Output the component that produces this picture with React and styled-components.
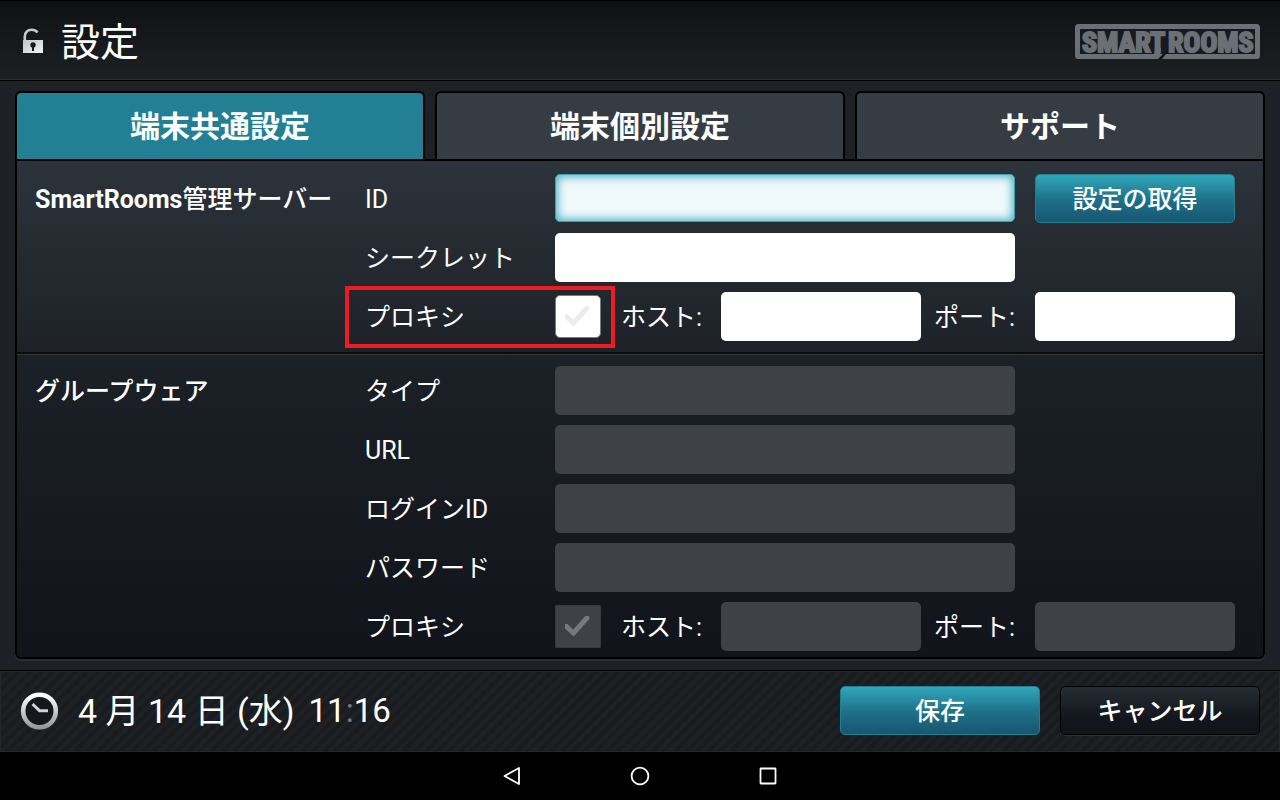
import { useState } from 'react';
import styled, { createGlobalStyle, css } from 'styled-components';

const tabs = ['端末共通設定', '端末個別設定', 'サポート'];

const LockIcon = () => (
  <svg width="24" height="28" viewBox="0 0 24 28" aria-hidden="true">
    <defs>
      <linearGradient id="lockBody" x1="0" y1="0" x2="1" y2="1">
        <stop offset="0" stopColor="#c4c4c4" />
        <stop offset="1" stopColor="#f2f2f2" />
      </linearGradient>
    </defs>
    <path d="M2.800 14V9.500C2.800 5 6 2.800 9.500 2.800C12 2.800 14 3.500 15.500 5.500" fill="none" stroke="#c8c8c8" strokeWidth="2.600" />
    <rect x="1" y="13" width="20" height="13" fill="url(#lockBody)" />
    <circle cx="11" cy="18" r="2.700" fill="#17191c" />
    <rect x="10" y="18" width="2" height="6" fill="#17191c" />
  </svg>
);

const ClockIcon = () => (
  <svg width="38" height="38" viewBox="0 0 38 38" aria-hidden="true">
    <defs>
      <linearGradient id="clockRing" x1="0" y1="0" x2="0" y2="1">
        <stop offset="0" stopColor="#ffffff" />
        <stop offset="1" stopColor="#989898" />
      </linearGradient>
    </defs>
    <circle cx="19.500" cy="19" r="16.300" fill="#15171a" stroke="url(#clockRing)" strokeWidth="4.600" />
    <path d="M12.500 12L19.500 18.700H28" fill="none" stroke="#d2d2d2" strokeWidth="3" />
  </svg>
);

const CheckMark = () => (
  <svg width="26" height="22" viewBox="0 0 26 22" aria-hidden="true">
    <path d="M1.500 10.500L8.500 17L22 2" fill="none" stroke="currentColor" strokeWidth="5" strokeLinecap="round" />
  </svg>
);

const Logo = () => (
  <svg width="186" height="38" viewBox="0 0 186 38" role="img" aria-label="SMART ROOMS">
    <rect x="3.500" y="4.500" width="180" height="30" rx="1" fill="#17191c" stroke="#6b6f76" strokeWidth="5" />
    <path d="M84 37L94 27V32H92L88 37Z" fill="#111316" />
    <path d="M81 26H87C87 32 86 37 77 37V33C80 33 81 31 81 26Z" fill="#6b6f76" />
    <LogoText x="8" y="30">SMART</LogoText>
    <LogoText x="94" y="30">ROOMS</LogoText>
  </svg>
);

const TextRow = ({ label, id, type = 'text', disabled, focused, children }) => (
  <>
    <Label htmlFor={id}>{label}</Label>
    <Field id={id} type={type} disabled={disabled} $focused={focused} />
    <Side>{children}</Side>
  </>
);

const ProxyRow = ({ id, disabled, marked }) => (
  <>
    <ProxyToggle $marked={marked}>
      <Label htmlFor={`${id}-proxy`}>プロキシ</Label>
      <CheckBox $disabled={disabled}>
        <input id={`${id}-proxy`} type="checkbox" disabled={disabled} />
        <CheckMark />
      </CheckBox>
    </ProxyToggle>
    <ProxyHost>
      <Label htmlFor={`${id}-host`}>ホスト:</Label>
      <Field id={`${id}-host`} type="text" disabled={disabled} />
      <Label htmlFor={`${id}-port`}>ポート:</Label>
    </ProxyHost>
    <Side>
      <Field id={`${id}-port`} type="text" disabled={disabled} />
    </Side>
  </>
);

const App = () => {
  const [active, setActive] = useState(0);

  return (
    <Screen>
      <GlobalStyle />
      <Header>
        <LockIcon />
        <h1>設定</h1>
        <Logo />
      </Header>
      <Main>
        <TabBar role="tablist">
          {tabs.map((tab, i) => (
            <Tab key={tab} type="button" role="tab" aria-selected={i === active} $active={i === active} onClick={() => setActive(i)}>
              {tab}
            </Tab>
          ))}
        </TabBar>
        <Panel>
          <Section $raised>
            <h2><b>SmartRooms</b>管理サーバー</h2>
            <Rows>
              <TextRow label="ID" id="server-id" focused>
                <Button type="button" $primary>設定の取得</Button>
              </TextRow>
              <TextRow label="シークレット" id="server-secret" type="password" />
              <ProxyRow id="server" marked />
            </Rows>
          </Section>
          <Section>
            <h2>グループウェア</h2>
            <Rows>
              <TextRow label="タイプ" id="group-type" disabled />
              <TextRow label="URL" id="group-url" disabled />
              <TextRow label="ログインID" id="group-login" disabled />
              <TextRow label="パスワード" id="group-password" type="password" disabled />
              <ProxyRow id="group" disabled />
            </Rows>
          </Section>
        </Panel>
      </Main>
      <Footer>
        <ClockIcon />
        <DateText>4 月 14 日 (水)</DateText>
        <TimeText>11<span>:</span>16</TimeText>
        <Button type="button" $primary>保存</Button>
        <Button type="button">キャンセル</Button>
      </Footer>
      <NavBar>
        <NavButton type="button" aria-label="戻る">
          <svg width="24" height="24" viewBox="0 0 24 24"><path d="M19 4v16L4.500 12Z" /></svg>
        </NavButton>
        <NavButton type="button" aria-label="ホーム">
          <svg width="24" height="24" viewBox="0 0 24 24"><circle cx="12" cy="12" r="8.400" /></svg>
        </NavButton>
        <NavButton type="button" aria-label="アプリ履歴">
          <svg width="24" height="24" viewBox="0 0 24 24"><rect x="4.500" y="4.500" width="15" height="15" rx="0.500" /></svg>
        </NavButton>
      </NavBar>
    </Screen>
  );
};

const GlobalStyle = createGlobalStyle`
  * {
    box-sizing: border-box;
  }

  body {
    margin: 0;
    background: #000;
    color: #fff;
    font: 25px/36px Roboto, 'Noto Sans CJK JP', sans-serif;
  }

  h1, h2 {
    margin: 0;
  }

  button, input {
    font: inherit;
    color: inherit;
  }
`

const Screen = styled.div`
  display: flex;
  flex-direction: column;
  min-height: 100vh;
  background: #1d2024;
`

const Header = styled.header`
  display: flex;
  align-items: center;
  height: 81px;
  padding: 0 20px 0 22px;
  border-top: 1px solid #000;
  border-bottom: 1px solid #000;
  box-shadow: inset 0 -1px #2c2f32;
  background: linear-gradient(#0f1012, #1d2124);

  h1 {
    flex: 1;
    padding: 4px 0 0 15px;
    font-size: 39px;
    font-weight: 400;
    line-height: 56px;
  }
`

const LogoText = styled.text`
  fill: #6b6f76;
  stroke: #6b6f76;
  stroke-width: 2px;
  font: 700 28px 'Liberation Sans Narrow', 'Roboto Condensed', Roboto, sans-serif;
`

const Main = styled.main`
  flex: 1;
  display: flex;
  flex-direction: column;
  padding: 10px 15px 11px;
`

const TabBar = styled.div`
  display: grid;
  grid-template-columns: repeat(3, 1fr);
  gap: 10px;
`

const Tab = styled.button`
  height: 68px;
  padding: 2px 0 0;
  border: 2px solid #000;
  border-bottom: 0;
  border-radius: 6px 6px 0 0;
  background: ${({ $active }) => ($active ? '#237f93' : '#363c44')};
  font-size: 30px;
  font-weight: 700;
`

const Panel = styled.div`
  flex: 1;
  border: 2px solid #000;
  border-radius: 0 0 6px 6px;
  box-shadow: 0 2px #2a2d31;
  background: #12151a;
  overflow: hidden;
`

const Section = styled.section`
  display: grid;
  grid-template-columns: 330px 1fr;
  padding: 12px 28px 6px 18px;
  background: linear-gradient(#1c2027, #11141a);

  ${({ $raised }) => $raised && css`
    position: relative;
    padding: 13px 28px 11px 18px;
    border-bottom: 2px solid #0a0b0d;
    box-shadow: 0 1px #34373b;
    background: linear-gradient(#2c333a, #1e2128);
  `}

  h2 {
    padding-top: 1px;
    font-size: 25px;
    font-weight: 500;
    line-height: 49px;
  }

  b {
    font-weight: 700;
  }
`

const Rows = styled.div`
  display: grid;
  grid-template-columns: 190px 46px 1fr 220px;
  gap: 10px 0;
`

const Label = styled.label`
  height: 49px;
  padding-top: 1px;
  line-height: 49px;
  white-space: nowrap;
`

const Field = styled.input`
  min-width: 0;
  width: 100%;
  height: 49px;
  padding: 0 12px;
  border: 0;
  border-radius: 5px;
  outline: 0;
  background: #fff;
  color: #222;

  ${Label} + & {
    grid-column: 2 / 4;
  }

  &:disabled {
    background: #3e4145;
  }

  ${({ $focused }) => $focused && css`
    height: 48px;
    border: 1px solid #3aa3b3;
    background: #eff8fb;
    box-shadow: inset 0 0 9px 2px #4db5c5;
  `}
`

const Side = styled.div`
  padding-left: 20px;
`

const ProxyToggle = styled.div`
  position: relative;
  grid-column: 1 / 3;
  display: grid;
  grid-template-columns: 190px 46px;
  align-items: center;

  ${({ $marked }) => $marked && css`
    &::after {
      content: '';
      position: absolute;
      inset: -6px -14px -7px -20px;
      border: 4px solid #ed1c24;
      pointer-events: none;
    }
  `}
`

const CheckBox = styled.span`
  display: grid;
  place-items: center;
  height: 43px;
  border: 1px solid #77797c;
  border-radius: 5px;
  background: #fff;
  color: #ececec;

  input {
    grid-area: 1 / 1;
    width: 100%;
    height: 100%;
    margin: 0;
    opacity: 0;
  }

  svg {
    grid-area: 1 / 1;
    pointer-events: none;
  }

  ${({ $disabled }) => $disabled && css`
    border-color: #36393d;
    border-radius: 1px;
    background: #3e4145;
    color: #77797c;
  `}
`

const ProxyHost = styled.div`
  display: grid;
  grid-template-columns: 100px 1fr 94px;
  padding-left: 20px;

  ${Field} {
    grid-column: auto;
  }

  ${Label}:last-child {
    padding-left: 13px;
  }
`

const Button = styled.button`
  width: 200px;
  height: 49px;
  padding: 2px 0 0;
  border: 1px solid ${({ $primary }) => ($primary ? '#1f7f8f' : '#000')};
  border-radius: 5px;
  background: ${({ $primary }) => ($primary ? 'linear-gradient(#30a7bb, #1f7189 52%, #165672)' : 'linear-gradient(#262c34, #12151a 70%)')};
  box-shadow: ${({ $primary }) => ($primary ? 'none' : '0 1px #2c2f33')};
  font-weight: 500;
  line-height: 36px;
`

const Footer = styled.footer`
  display: flex;
  align-items: center;
  height: 82px;
  padding: 0 20px 2px;
  border-top: 1px solid #000;
  box-shadow: inset 0 0 0 1px #25282b;
  background: repeating-linear-gradient(135deg, #1d2124 0 4px, #191b1f 4px 8px);

  ${Button} + ${Button} {
    margin-left: 20px;
  }
`

const DateText = styled.time`
  padding-left: 20px;
  font-size: 34px;
  line-height: 48px;
`

const TimeText = styled.time`
  flex: 1;
  padding-left: 14px;
  font-size: 33px;
  line-height: 48px;

  span {
    color: #77797c;
  }
`

const NavBar = styled.nav`
  display: flex;
  justify-content: center;
  gap: 80px;
  height: 48px;
  background: #000;
`

const NavButton = styled.button`
  display: grid;
  place-items: center;
  width: 48px;
  padding: 0;
  border: 0;
  background: none;

  svg {
    fill: none;
    stroke: #fff;
    stroke-width: 1.800;
    stroke-linejoin: round;
  }
`

export default App;
